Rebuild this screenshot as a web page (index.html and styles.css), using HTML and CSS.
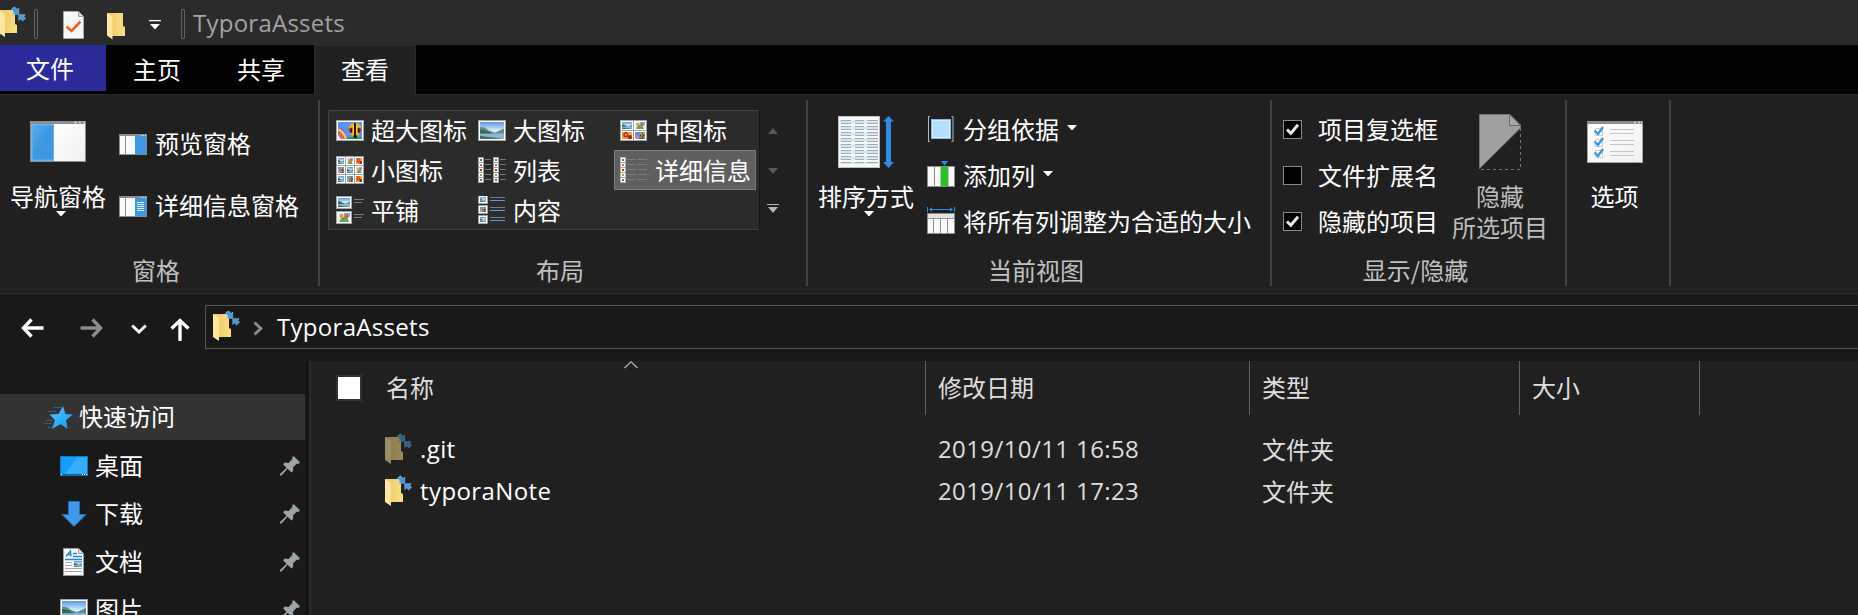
FILE: index.html
```html
<!DOCTYPE html>
<html lang="zh-CN">
<head>
<meta charset="utf-8">
<title>TyporaAssets</title>
<link rel="stylesheet" href="styles.css">
</head>
<body>
<svg class="defs" width="0" height="0">
  <defs>
    <linearGradient id="gFold" x1="0" x2="1"><stop offset="0" stop-color="#eec764"/><stop offset="1" stop-color="#fbdf83"/></linearGradient>
    <linearGradient id="gFlap" x1="0" x2="1" y1="0" y2="1"><stop offset="0" stop-color="#ffeab0"/><stop offset="1" stop-color="#ffe290"/></linearGradient>
    <linearGradient id="gSky" x2="0" y2="1"><stop offset="0" stop-color="#5b97ea"/><stop offset=".5" stop-color="#d8ecfb"/><stop offset="1" stop-color="#9cc4de"/></linearGradient>
    <linearGradient id="gBlue" x2="1" y2="1"><stop offset="0" stop-color="#57aaec"/><stop offset=".5" stop-color="#3c98e2"/><stop offset="1" stop-color="#3c98e2"/></linearGradient>
    <linearGradient id="gWhite" x2="1" y2="1"><stop offset="0" stop-color="#fff"/><stop offset="1" stop-color="#f0f0f2"/></linearGradient>
    <linearGradient id="gStar" x2="1" y2="1"><stop offset="0" stop-color="#59c4ff"/><stop offset="1" stop-color="#0f9bfb"/></linearGradient>
  </defs>
  <symbol id="plain-folder" viewBox="0 0 19 28">
    <path d="M0 1H16V14L18 15V24H5L0 22Z" fill="url(#gFold)"/>
    <path d="M0 1L5.500 5V27.500L0 23.500Z" fill="url(#gFlap)"/>
  </symbol>
  <symbol id="folder-link" viewBox="0 0 27 32">
    <path d="M0 4H16V18L18 19V27H5L0 25Z" fill="url(#gFold)"/>
    <path d="M0 4L6 8V31L0 27Z" fill="url(#gFlap)"/>
    <g fill="#3f9be6" stroke="#b8cfdf" stroke-width=".5" stroke-linejoin="round">
      <path d="M12.500 3L15.500 .8L18.200 3.500L19.700 2V8.300H13.400L15 6.800Z"/>
      <path d="M19.800 8.700H26.300L24.700 10.300L26.600 12.300L23.700 15L21.400 12.800L19.800 14.500Z"/>
    </g>
  </symbol>
  <symbol id="land" viewBox="0 0 24 16" preserveAspectRatio="none">
    <rect width="24" height="16" fill="url(#gSky)"/>
    <path d="M0 5L4 5L9 8L15 10L24 6V11H0Z" fill="#5f8f7d"/>
    <path d="M0 7L6 8L13 11H0Z" fill="#356a55"/>
    <path d="M0 11H24V16H0Z" fill="#8ab6d3"/>
    <path d="M0 16V13L12 14.500L24 16Z" fill="#46705f"/>
  </symbol>
  <symbol id="balloon" viewBox="0 0 24 16" preserveAspectRatio="none">
    <rect width="24" height="16" fill="#5695f6"/>
    <path d="M0 16V7Q3 3 6 7L11 16Z" fill="#8e6bd0"/>
    <path d="M0 9Q4 8 7 16H4Z" fill="#ef6a3a"/>
    <path d="M1 6Q6 8 9 15L7 16Q5 10 0 8Z" fill="#f6d25a"/>
    <path d="M0 12L3 16H0Z" fill="#f3e9f3"/>
    <path d="M9 14.500H24V16H9Z" fill="#2f8d3a"/>
    <path d="M10.500 6.500Q11.500 1 17 1Q22.500 1 23.500 6.500Q22 12 18.500 13.500H15.500Q12 12 10.500 6.500Z" fill="#f2b01c"/>
    <path d="M10.500 6.500Q12 5 17 5Q22 5 23.500 6.500Q23 8.500 22 10H12Q11 8.500 10.500 6.500Z" fill="#b3301a"/>
    <path d="M14.500 3H19.500V12H14.500Z" fill="#fbd21a"/>
    <path d="M16 1H18V13H16ZM12.500 6H14V10H12.500ZM20 6H21.500V10H20Z" fill="#231a12"/>
    <rect x="15.500" y="12.500" width="3.500" height="2.500" fill="#251b10"/>
  </symbol>
  <symbol id="flower" viewBox="0 0 24 16" preserveAspectRatio="none">
    <rect width="24" height="16" fill="#e7edf7"/>
    <path d="M12 0H24V7H12Z" fill="#8e9eea"/>
    <circle cx="7" cy="5" r="4" fill="#f09a3c"/><circle cx="17" cy="6" r="4" fill="#d8623a"/>
    <path d="M3 16Q5 7 12 7Q20 9 22 16Z" fill="#67a84f"/>
  </symbol>
  <symbol id="red" viewBox="0 0 24 16" preserveAspectRatio="none">
    <rect width="24" height="16" fill="#f0a33a"/>
    <circle cx="9" cy="6" r="6" fill="#cf2419"/><circle cx="19" cy="12" r="5" fill="#b81c12"/><rect x="7" y="4" width="4" height="4" fill="#f6d36a"/>
  </symbol>
  <symbol id="pin" viewBox="0 0 20 20">
    <path d="M13.500 0L20 6.200L18.500 8L17 7.500L13 11.500L13.300 14.500L11.500 16.500L7.500 12.800L1.500 19.500H0V18L6.500 11.800L3 8.300L4.800 6.500L8.500 7L12.500 3L12 1.500Z" fill="#9aa4aa"/>
  </symbol>
  <symbol id="tick" viewBox="0 0 19 19">
    <rect x=".5" y=".5" width="18" height="18" fill="#000" stroke="#8a8a8a"/>
    <path d="M4 9.500L7.800 13.300L15 4.800" fill="none" stroke="#e8e8e8" stroke-width="2.900"/>
  </symbol>
  <symbol id="tri" viewBox="0 0 10 5"><path d="M0 0H10L5.500 5H4.500Z" fill="#fff"/></symbol>
</svg>

<header class="titlebar">
  <svg class="tb-folder" width="27" height="32"><use href="#folder-link"/></svg>
  <span class="tb-sep"></span>
  <svg class="tb-doc" width="21" height="28" viewBox="0 0 21 28"><path d="M.5 .5H15.500L20.500 5.500V27.500H.5Z" fill="#f6f7f9" stroke="#a9abad"/><path d="M15.500 .5V5.500H20.500" fill="#d5d7d9" stroke="#9a9c9e"/><path d="M3.500 15.500L8.500 20L17.500 10.500" fill="none" stroke="#f4611c" stroke-width="2.600"/></svg>
  <svg class="tb-plain" width="19" height="28"><use href="#plain-folder"/></svg>
  <svg class="tb-more" width="12" height="10" viewBox="0 0 12 10"><path d="M0 0H12V1.300H0ZM1 4H11L6 9.500Z" fill="#fff"/></svg>
  <span class="tb-sep"></span>
  <span class="latin tb-title">TyporaAssets</span>
</header>

<nav class="tabs">
  <span class="tab file">文件</span><span class="tab">主页</span><span class="tab">共享</span><span class="tab active">查看</span>
</nav>

<section class="ribbon">
  <div class="group g-panes">
    <div class="body">
      <div class="big">
        <div class="big-icon"><svg width="56" height="41" viewBox="0 0 56 41"><rect width="56" height="41" fill="#8b8d8f"/><path d="M44 1.500H47M49 1.500H51M53 1.500H55" stroke="#c9c9c9" stroke-width="2"/><rect x="1" y="3" width="23" height="37" fill="#68b3ee"/><rect x="2.500" y="4.500" width="20.500" height="34" fill="url(#gBlue)"/><rect x="24" y="3" width="31" height="37" fill="url(#gWhite)"/></svg></div>
        <span>导航窗格</span>
        <svg class="drop" width="10" height="5"><use href="#tri"/></svg>
      </div>
      <div class="smalls">
        <div class="small"><svg width="28" height="21" viewBox="0 0 28 21"><rect width="28" height="21" fill="#8b8d8f"/><path d="M22 1.500H27" stroke="#ddd" stroke-dasharray="1 1"/><path d="M1 2H6V20H1ZM7 2H16V20H7Z" fill="#fafafa"/><rect x="16" y="2" width="11" height="18" fill="#3c98e2"/></svg><span>预览窗格</span></div>
        <div class="small"><svg width="28" height="21" viewBox="0 0 28 21"><rect width="28" height="21" fill="#8b8d8f"/><path d="M22 1.500H27" stroke="#ddd" stroke-dasharray="1 1"/><path d="M1 2H6V20H1ZM7 2H16V20H7Z" fill="#fafafa"/><rect x="16" y="2" width="11" height="18" fill="#3c98e2"/><path d="M18 6.500H25M18 8.500H25M18 10.500H25M18 12.500H25M18 14.500H25" stroke="#e2f0fb"/></svg><span>详细信息窗格</span></div>
      </div>
    </div>
    <div class="caption">窗格</div>
  </div>

  <div class="group g-layout">
    <div class="body">
      <div class="gallery">
        <div class="item"><svg width="28" height="28" viewBox="0 0 28 28"><rect x=".5" y="4.500" width="27" height="20" fill="#fff" stroke="#a4a4a4"/><use href="#balloon" x="2" y="6" width="24" height="17"/></svg>超大图标</div>
        <div class="item"><svg width="28" height="28" viewBox="0 0 28 28"><rect x=".5" y="4.500" width="27" height="20" fill="#fff" stroke="#a4a4a4"/><use href="#land" x="2" y="6" width="24" height="17"/></svg>大图标</div>
        <div class="item"><svg width="28" height="28" viewBox="0 0 28 28"><rect x=".5" y="4.500" width="26" height="20" fill="#fff" stroke="#a4a4a4"/><path d="M13.500 4V25M0 14.500H27" stroke="#a4a4a4"/><use href="#land" x="2" y="6" width="10" height="7"/><use href="#flower" x="15" y="6" width="10" height="7"/><use href="#red" x="2" y="16" width="10" height="7"/><use href="#balloon" x="15" y="16" width="10" height="7"/></svg>中图标</div>
        <div class="item"><svg width="28" height="28" viewBox="0 0 28 28"><rect x=".5" y=".5" width="27" height="27" fill="#fff" stroke="#a4a4a4"/><path d="M9.500 0V28M18.500 0V28M0 9.500H28M0 18.500H28" stroke="#a4a4a4"/><use href="#land" x="2" y="2" width="6" height="6"/><use href="#flower" x="11" y="2" width="6" height="6"/><use href="#red" x="20" y="2" width="6" height="6"/><use href="#balloon" x="2" y="11" width="6" height="6"/><use href="#land" x="11" y="11" width="6" height="6"/><use href="#flower" x="20" y="11" width="6" height="6"/><use href="#land" x="2" y="20" width="6" height="6"/><use href="#balloon" x="11" y="20" width="6" height="6"/><use href="#red" x="20" y="20" width="6" height="6"/></svg>小图标</div>
        <div class="item"><svg width="28" height="28" viewBox="0 0 28 28"><path d="M.5 1.500H5.500V26.500H.5ZM15.500 1.500H20.500V26.500H15.500Z" fill="#fff" stroke="#a4a4a4"/><path d="M0 6.500H6M0 11.500H6M0 16.500H6M0 21.500H6M15 6.500H21M15 11.500H21M15 16.500H21M15 21.500H21" stroke="#a4a4a4"/><path d="M2 4H4M17 4H19M2 24H4M17 24H19" stroke="#3c7cc0" stroke-width="2"/><path d="M2 9H4M17 9H19" stroke="#b07a50" stroke-width="2"/><path d="M2 14H4M17 14H19" stroke="#d22" stroke-width="2"/><path d="M2 19H4M17 19H19" stroke="#8bb060" stroke-width="2"/><path d="M7 3.500H13M7 8.500H13M7 13.500H13M7 18.500H13M7 23.500H13M22 3.500H28M22 8.500H28M22 13.500H28M22 18.500H28M22 23.500H28" stroke="#767676"/></svg>列表</div>
        <div class="item selected"><svg width="28" height="28" viewBox="0 0 28 28"><path d="M.5 1.500H5.500V26.500H.5Z" fill="#fff" stroke="#b4b4b4"/><path d="M0 6.500H6M0 11.500H6M0 16.500H6M0 21.500H6" stroke="#a4a4a4"/><path d="M2 4H4M2 24H4" stroke="#3c7cc0" stroke-width="2"/><path d="M2 9H4" stroke="#b07a50" stroke-width="2"/><path d="M2 14H4" stroke="#d22" stroke-width="2"/><path d="M2 19H4" stroke="#8bb060" stroke-width="2"/><path d="M7 3.500H16M7 8.500H16M7 13.500H16M7 18.500H16M7 23.500H16M18 3.500H27M18 8.500H27M18 13.500H27M18 18.500H27M18 23.500H27" stroke="#7c7c7c"/></svg>详细信息</div>
        <div class="item"><svg width="28" height="28" viewBox="0 0 28 28"><rect x=".5" y=".5" width="15" height="12" fill="#fff" stroke="#a4a4a4"/><rect x=".5" y="15.500" width="15" height="12" fill="#fff" stroke="#a4a4a4"/><use href="#land" x="2" y="2" width="12" height="9"/><use href="#flower" x="2" y="17" width="12" height="9"/><path d="M18 3.500H28M18 6.500H26M18 18.500H28M18 21.500H26" stroke="#7c7c7c"/></svg>平铺</div>
        <div class="item"><svg width="28" height="28" viewBox="0 0 28 28"><path d="M.5 -.5H9.500V7.500H.5ZM.5 9.500H9.500V17.500H.5ZM.5 19.500H9.500V27.500H.5Z" fill="#fff" stroke="#a4a4a4"/><use href="#land" x="2" y="1" width="6" height="5"/><use href="#balloon" x="2" y="11" width="6" height="5"/><use href="#land" x="2" y="21" width="6" height="5"/><path d="M12 1.500H27M12 11.500H27M12 21.500H27" stroke="#7c7c7c"/><path d="M12 4.500H27M12 14.500H27M12 24.500H27" stroke="#5e9be6"/></svg>内容</div>
      </div>
      <div class="scroller">
        <span><svg width="10" height="6" viewBox="0 0 10 6"><path d="M5 0L10 6H0Z" fill="#585858"/></svg></span>
        <span><svg width="10" height="6" viewBox="0 0 10 6"><path d="M0 0H10L5 6Z" fill="#585858"/></svg></span>
        <span class="more"><svg width="12" height="9" viewBox="0 0 12 9"><path d="M0 0H12V1H0ZM1 3H11L6 9Z" fill="#b4b4b4"/></svg></span>
      </div>
    </div>
    <div class="caption">布局</div>
  </div>

  <div class="group g-view">
    <div class="body">
      <div class="big">
        <div class="big-icon"><svg width="56" height="52" viewBox="0 0 56 52"><rect x=".5" y=".5" width="41" height="51" fill="#f8f8f8" stroke="#c0c0c0"/><path d="M2 6H40M2 12H40M2 18H40M2 24H40M2 30H40M2 36H40M2 42H40" stroke="#cde9f4" stroke-width="3"/><path d="M2 47H40" stroke="#cde9f4" stroke-width="2"/><path d="M3 4.500H40M3 7.500H40M3 10.500H40M3 13.500H40M3 16.500H40M3 19.500H40M3 22.500H40M3 25.500H40M3 28.500H40M3 31.500H40M3 34.500H40M3 37.500H40M3 40.500H40M3 43.500H40M3 46.500H40" stroke="#a6abb0" stroke-dasharray="10 4 9 3 12"/><path d="M50.500 0L56 5.500H53V46H56L50.500 52L45 46H48V5.500H45Z" fill="#2e8de0"/></svg></div>
        <span>排序方式</span>
        <svg class="drop" width="10" height="5"><use href="#tri"/></svg>
      </div>
      <div class="smalls">
        <div class="small"><svg width="28" height="28" viewBox="0 0 28 28"><path d="M3 1.500H1.500V26.500H3M24.500 1.500H26V26.500H24.500" fill="none" stroke="#bcbcbc"/><rect x="4.500" y="4.500" width="19" height="19" fill="#b5defc" stroke="#7dbbe9"/><rect x="5.500" y="5.500" width="17" height="17" fill="none" stroke="#d4ecfd"/></svg><span>分组依据</span><svg class="side" width="10" height="5"><use href="#tri"/></svg></div>
        <div class="small"><svg width="28" height="28" viewBox="0 0 28 28"><path d="M14 0H21L17.500 4.500Z" fill="#2e8de0"/><rect x=".5" y="5.500" width="27" height="20" fill="#fafafa" stroke="#8b8d8f"/><path d="M7.500 5V26M14 5V26M21 5V26" stroke="#8b8d8f"/><rect x="14" y="6" width="7" height="19" fill="#22c522"/></svg><span>添加列</span><svg class="side" width="10" height="5"><use href="#tri"/></svg></div>
        <div class="small"><svg width="28" height="28" viewBox="0 0 28 28"><path d="M.5 0V5M27.500 0V5M3 2.500H25" stroke="#2e8de0"/><path d="M2 2.500L5 .3V4.700ZM26 2.500L23 .3V4.700Z" fill="#2e8de0"/><rect x=".5" y="6.500" width="27" height="20" fill="#fafafa" stroke="#8b8d8f"/><rect x="1" y="7" width="26" height="4" fill="#e3e3e3"/><path d="M0 11.500H28M6.500 11V27M13.500 11V27M20.500 11V27" stroke="#8b8d8f"/></svg><span>将所有列调整为合适的大小</span></div>
      </div>
    </div>
    <div class="caption">当前视图</div>
  </div>

  <div class="group g-show">
    <div class="body">
      <div class="checks">
        <div class="check"><svg width="19" height="19"><use href="#tick"/></svg><span>项目复选框</span></div>
        <div class="check"><svg width="19" height="19" viewBox="0 0 19 19"><rect x=".5" y=".5" width="18" height="18" fill="#000" stroke="#8a8a8a"/></svg><span>文件扩展名</span></div>
        <div class="check"><svg width="19" height="19"><use href="#tick"/></svg><span>隐藏的项目</span></div>
      </div>
      <div class="big disabled">
        <div class="big-icon"><svg width="42" height="56" viewBox="0 0 42 56"><path d="M41.500 14V55.500H0" fill="none" stroke="#777" stroke-dasharray="3 3"/><path d="M.5 .5H31L41.500 11V14L.5 54.500Z" fill="#a0a0a0" stroke="#777"/><path d="M30.500 .5V11.500H41.500Z" fill="#a8a8a8" stroke="#6c6c6c"/></svg></div>
        <span>隐藏</span><span>所选项目</span>
      </div>
    </div>
    <div class="caption">显示/隐藏</div>
  </div>

  <div class="group g-options">
    <div class="body">
      <div class="big">
        <div class="big-icon"><svg width="56" height="42" viewBox="0 0 56 42"><rect x=".5" y=".5" width="55" height="41" fill="url(#gWhite)" stroke="#a3a5a7"/><rect width="56" height="3" fill="#8b8d8f"/><path d="M47 1.500H49M51 1.500H53M54 1.500H55" stroke="#c9c9c9" stroke-width="2"/><path d="M8.500 7.500H15.500V14.500H8.500ZM8.500 18.500H15.500V25.500H8.500ZM8.500 29.500H15.500V36.500H8.500Z" fill="#fff" stroke="#ccc"/><path d="M7.500 9.500L11 13L16 6M7.500 20.500L11 24L16 17M7.500 31.500L11 35L16 28" fill="none" stroke="#3c98e2" stroke-width="2.400"/><path d="M23 8.500H47M23 12.500H47M23 19.500H47M23 23.500H47M23 30.500H47M23 34.500H47" stroke="#c5c5c7"/></svg></div>
        <span>选项</span>
      </div>
    </div>
  </div>
</section>

<section class="navbar">
  <svg class="nav-back" width="23" height="20" viewBox="0 0 23 20"><path d="M22.500 10H3M10.500 1.500L2.500 10L10.500 18.500" fill="none" stroke="#fff" stroke-width="3.400"/></svg>
  <svg class="nav-fwd" width="23" height="20" viewBox="0 0 23 20"><path d="M.5 10H20M12.500 1.500L20.500 10L12.500 18.500" fill="none" stroke="#8b8b8b" stroke-width="3.400"/></svg>
  <svg class="nav-hist" width="16" height="10" viewBox="0 0 16 10"><path d="M1.200 1.500L8 8L14.800 1.500" fill="none" stroke="#f4f4f4" stroke-width="3"/></svg>
  <svg class="nav-up" width="20" height="23" viewBox="0 0 20 23"><path d="M10 23V3M1.500 10.500L10 2.500L18.500 10.500" fill="none" stroke="#fff" stroke-width="3.400"/></svg>
  <div class="address">
    <svg width="27" height="32"><use href="#folder-link"/></svg>
    <svg class="crumb" width="10" height="15" viewBox="0 0 10 15"><path d="M1.500 1.500L7.800 7.500L1.500 13.500" fill="none" stroke="#8b8b8b" stroke-width="3"/></svg>
    <span class="latin">TyporaAssets</span>
  </div>
</section>

<main class="main">
  <aside class="side-nav">
    <div class="quick"><svg width="30" height="25" viewBox="0 0 30 25"><path d="M10 2.500H18M5 6.500H13M3 15.500H10M1 18.500H9M5 22.500H9" stroke="#2180bd" opacity=".6"/><path d="M20 1L22.500 9L30 9.500L23 15L24.500 24L17.500 19L9 24L12 15L6.500 9.500L15.500 9Z" fill="url(#gStar)"/></svg><span>快速访问</span></div>
    <div class="place"><svg width="28" height="28" viewBox="0 0 28 28"><rect x=".5" y="4.500" width="27" height="19" fill="#149dfd" stroke="#1278bd"/><path d="M5 22L17 5H27V22Z" fill="#36acfd"/><path d="M1 22.500H27" stroke="#075b97"/><path d="M1 22.500H2M22 22.500H27" stroke="#fff" stroke-dasharray="1 1"/></svg><span>桌面</span><svg class="pin" width="20" height="20"><use href="#pin"/></svg></div>
    <div class="place"><svg width="28" height="28" viewBox="0 0 28 28"><path d="M8.500 1.500H19.500V14.500H26L14 26.500L2 14.500H8.500Z" fill="#3f9ae8" stroke="#1d6fae"/></svg><span>下载</span><svg class="pin" width="20" height="20"><use href="#pin"/></svg></div>
    <div class="place"><svg width="28" height="28" viewBox="0 0 28 28"><path d="M3.500 .5H18.500L23.500 5.500V27.500H3.500Z" fill="#fbfbfb" stroke="#9b9d9f"/><path d="M18.500 .5V5.500H23.500" fill="#ddd" stroke="#9b9d9f"/><path d="M6 8.500L10.500 3L11 8.500M7.500 6.500H11M13 5.500H17M13 8.500H22M5 11.500H22" fill="none" stroke="#1788d8" stroke-width="1.300"/><path d="M5 14.500H12M5 17.500H12M5 20.500H22M5 23.500H22" stroke="#a7a7a7"/><use href="#land" x="14" y="13" width="8" height="6"/></svg><span>文档</span><svg class="pin" width="20" height="20"><use href="#pin"/></svg></div>
    <div class="place"><svg width="28" height="28" viewBox="0 0 28 28"><rect x=".5" y="3.500" width="27" height="21" fill="#fff" stroke="#a4a4a4"/><use href="#land" x="2" y="5" width="24" height="18"/></svg><span>图片</span><svg class="pin" width="20" height="20"><use href="#pin"/></svg></div>
  </aside>
  <div class="splitter"></div>
  <section class="list">
    <div class="head">
      <div class="cell name"><span class="selectall"></span><span>名称</span><svg class="sort" width="14" height="8" viewBox="0 0 14 8"><path d="M.5 7L7 .8L13.500 7" fill="none" stroke="#b9b9b9" stroke-width="1.100"/></svg></div>
      <div class="cell date"><span>修改日期</span></div>
      <div class="cell type"><span>类型</span></div>
      <div class="cell size"><span>大小</span></div>
    </div>
    <div class="row"><div class="fname"><svg class="dim" width="27" height="32"><use href="#folder-link"/></svg><span class="latin">.git</span></div><div class="latin fdate">2019/10/11 16:58</div><div class="ftype">文件夹</div></div>
    <div class="row"><div class="fname"><svg width="27" height="32"><use href="#folder-link"/></svg><span class="latin">typoraNote</span></div><div class="latin fdate">2019/10/11 17:23</div><div class="ftype">文件夹</div></div>
  </section>
</main>
</body>
</html>
```

FILE: styles.css
```css
* { box-sizing: border-box; }
html, body { margin: 0; height: 615px; overflow: hidden; }
body {
  display: flex;
  flex-direction: column;
  width: 1858px;
  background: #191919;
  color: #fff;
  font: 24px/32px "Noto Sans CJK SC", sans-serif;
  white-space: nowrap;
}
svg { display: block; flex: none; }
.defs { position: absolute; }
.latin { font-family: "Open Sans", "Noto Sans CJK SC", sans-serif; letter-spacing: .4px; }

.titlebar { display: flex; align-items: flex-start; flex: none; height: 45px; background: #2b2b2b; }
.tb-folder { margin: 6px 0 0 -1px; }
.tb-sep { width: 4px; height: 30px; margin: 9px 0 0 8px; border: 1px solid #646464; border-radius: 1px; }
.tb-doc { margin: 11px 0 0 25px; }
.tb-plain { margin: 12px 0 0 23px; }
.tb-more { margin: 20px 0 0 23px; }
.tb-more + .tb-sep { margin-left: 20px; }
.tb-title { margin: 7px 0 0 8px; color: #a3a3a3; letter-spacing: .25px; }

.tabs { display: flex; flex: none; height: 50px; background: #000; border-bottom: 1px solid #2b2b2b; }
.tab { width: 104px; height: 49px; padding-right: 2px; line-height: 48px; text-align: center; }
.file { width: 106px; height: 46px; padding-right: 6px; background: #2b2a9b; line-height: 46px; }
.active { width: 102px; height: 50px; padding-right: 0; background: #202020; border: solid #2b2b2b; border-width: 1px 1px 0; line-height: 46px; }

.ribbon { display: flex; flex: none; height: 199px; padding-top: 5px; background: #202020; border-bottom: 1px solid #2e2e2e; }
.group { display: flex; flex-direction: column; height: 186px; border-right: 2px solid #424242; }
.body { display: flex; height: 156px; }
.caption { padding-right: 6px; color: #c0c0c0; text-align: center; }
.g-panes { width: 320px; }
.g-layout { width: 488px; }
.g-view { width: 464px; }
.g-show { width: 295px; }
.g-options { width: 104px; }

.big { display: flex; flex-direction: column; align-items: center; width: 96px; }
.big-icon { display: flex; align-items: center; height: 80px; padding-top: 3px; }
.big > span { height: 31px; line-height: 31px; }
.drop { margin: 0 0 0 6px; }
.g-panes .big { margin-left: 10px; }
.g-view .big { margin-left: 10px; }
.g-options .big { width: 95px; }
.g-options .big-icon { padding-left: 1px; padding-top: 4px; }
.g-view .big-icon { padding-top: 4px; }
.smalls { display: flex; flex-direction: column; }
.small { display: flex; align-items: center; gap: 8px; }
.side { margin-top: -4px; }
.g-panes .smalls { margin: 13px 0 0 13px; }
.g-panes .small { height: 62px; }
.g-panes .small span { padding-bottom: 2px; }
.g-view .smalls { margin: 6px 0 0 13px; }
.g-view .small, .check { height: 46px; }
.checks { margin: 6px 0 0 11px; }
.check { display: flex; align-items: center; gap: 16px; }
.g-show .big { margin-left: 14px; }
.g-show .big-icon { padding-top: 4px; }
.disabled { color: #bdbdbd; }

.gallery {
  display: grid;
  grid-template-columns: repeat(3, 142px);
  grid-template-rows: repeat(3, 40px);
  width: 431px;
  height: 120px;
  margin: 10px 0 0 8px;
  padding-left: 1px;
  background: #2b2b2b;
  border: 1px solid #414141;
  border-right: 0;
  align-content: center;
}
.item { display: flex; align-items: center; gap: 7px; padding: 0 0 1px 6px; }
.item svg { margin-top: 1px; }
.selected { background: #5f5f5f; outline: 1px solid #7b7b7b; outline-offset: -1px; }
.scroller { width: 29px; height: 120px; margin-top: 10px; border-left: 1px solid #161616; }
.scroller span { display: flex; align-items: center; justify-content: center; height: 40px; padding: 2px 2px 0 0; }
.scroller .more { align-items: flex-start; padding-top: 14px; }

.navbar { display: flex; flex: none; height: 67px; }
.nav-back { margin: 24px 0 0 21px; }
.nav-fwd { margin: 24px 0 0 36px; }
.nav-hist { margin: 30px 0 0 28px; }
.nav-up { margin: 24px 0 0 23px; }
.address { display: flex; align-items: center; flex: 1; height: 44px; margin: 11px 0 0 15px; padding-left: 7px; border: 1px solid #565656; border-right: 0; }
.address > svg:first-child { margin-top: -2px; }
.address .latin { letter-spacing: .3px; }
.crumb { margin: 2px 14px 0 13px; }

.main { display: flex; flex: 1; min-height: 0; }
.side-nav { width: 305px; padding-top: 33px; }
.quick { display: flex; align-items: center; gap: 6px; height: 46px; margin-bottom: 2px; padding: 1px 0 0 43px; background: #333; }
.quick span, .place span { padding-bottom: 3px; }
.place { display: flex; align-items: center; gap: 7px; height: 48px; padding: 0 5px 0 60px; }
.place > svg { margin-top: -1px; }
.place > .pin { margin-left: auto; }
.splitter { width: 6px; border-left: 1px solid #191919; border-right: 2px solid #2b2b2b; background: #131313; }
.list { flex: 1; background: #202020; }
.head { display: flex; height: 54px; color: #dedede; }
.cell { display: flex; align-items: center; border-right: 1px solid #636363; padding-left: 12px; }
.cell span:last-of-type { padding-bottom: 3px; }
.name { position: relative; width: 615px; padding-left: 25px; }
.date { width: 324px; }
.type { width: 270px; }
.size { width: 180px; }
.selectall { width: 26px; height: 26px; margin-right: 24px; background: #fff; border: 2px solid #333; }
.sort { position: absolute; left: 313px; top: 0; }
.row { display: flex; align-items: center; height: 42px; }
.head + .row { margin-top: 13px; }
.fname { display: flex; align-items: center; gap: 8px; width: 627px; padding-left: 74px; }
.fdate { width: 324px; color: #dedede; }
.ftype { padding-bottom: 1px; color: #dedede; }
.dim { opacity: .55; }
```
